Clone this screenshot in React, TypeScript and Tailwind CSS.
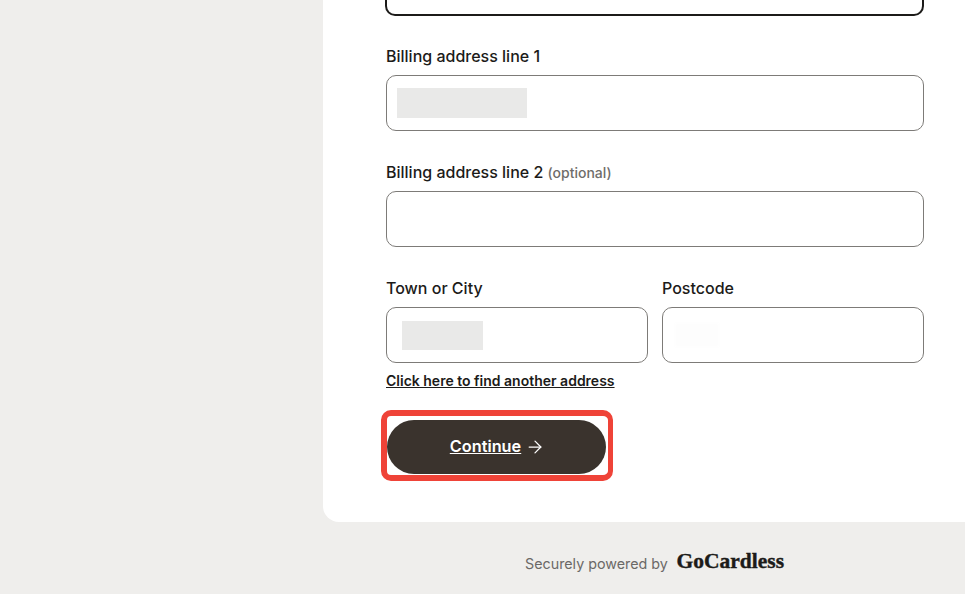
import { ArrowRight } from "lucide-react";

const labelClass = "text-[16px] leading-[20px] font-medium text-[#1c1b19]";
const inputClass = "h-[56px] w-full rounded-[10px] border border-[#7d7b78] bg-white flex items-center";

function Blur({ className }: { className: string }) {
  return <div className={`bg-[#e9e9e8] blur-[0.5px] ${className}`} />;
}

export default function App() {
  return (
    <div
      className="h-[594px] w-[965px] overflow-hidden bg-[#efeeec] flex flex-col"
      style={{ fontFamily: "Inter, 'Noto Sans', sans-serif" }}
    >
      <div className="flex flex-1">
        <div className="w-[323px] shrink-0" />
        <div className="flex-1 h-[522px] bg-white rounded-bl-[16px] pl-[63px] pr-[41px] flex flex-col">
          <div className="h-[16px] rounded-b-[10px] border-2 border-t-0 border-[#1c1b19] -ml-px" />

          <div className="mt-[30px] flex flex-col gap-[9px]">
            <label className={labelClass}>Billing address line 1</label>
            <div className={`${inputClass} pl-[10px]`}>
              <Blur className="w-[130px] h-[30px]" />
            </div>
          </div>

          <div className="mt-[31px] flex flex-col gap-[8px]">
            <label className={labelClass}>
              Billing address line 2{" "}
              <span className="text-[14px] text-[#6f6d6a]">(optional)</span>
            </label>
            <div className={inputClass} />
          </div>

          <div className="mt-[31px] flex gap-[14px]">
            <div className="flex-1 flex flex-col gap-[9px]">
              <label className={labelClass}>Town or City</label>
              <div className={`${inputClass} pl-[15px]`}>
                <Blur className="w-[81px] h-[29px]" />
              </div>
            </div>
            <div className="flex-1 flex flex-col gap-[9px]">
              <label className={labelClass}>Postcode</label>
              <div className={`${inputClass} pl-[12px]`}>
                <div className="w-[44px] h-[24px] bg-[#fdfdfd] blur-[1px]" />
              </div>
            </div>
          </div>

          <a className="mt-[9px] self-start text-[14px] leading-[18px] font-semibold text-[#1c1b19] underline">
            Click here to find another address
          </a>

          <div className="mt-[20px] -ml-[5px] w-[232px] h-[71px] rounded-[10px] border-[6px] border-r-[5px] border-[#ef4338] flex items-start pt-[4px]">
            <button className="w-[219px] h-[54px] rounded-full bg-[#3a332d] text-white flex items-center justify-center gap-[4px] pl-[2px] pb-[1px]">
              <span className="text-[16.3px] font-semibold underline">Continue</span>
              <ArrowRight size={20} strokeWidth={1.5} />
            </button>
          </div>
        </div>
      </div>

      <div className="h-[72px] pl-[525px] pr-[181px] flex items-center justify-between pt-[12px]">
        <span className="text-[14.3px] text-[#6b6967]">Securely powered by</span>
        <span
          className="text-[21.5px] font-bold text-[#1c1b19] leading-none mb-[4px] [-webkit-text-stroke:0.4px_#1c1b19]"
          style={{ fontFamily: "'Liberation Serif', serif" }}
        >
          GoCardless
        </span>
      </div>
    </div>
  );
}
